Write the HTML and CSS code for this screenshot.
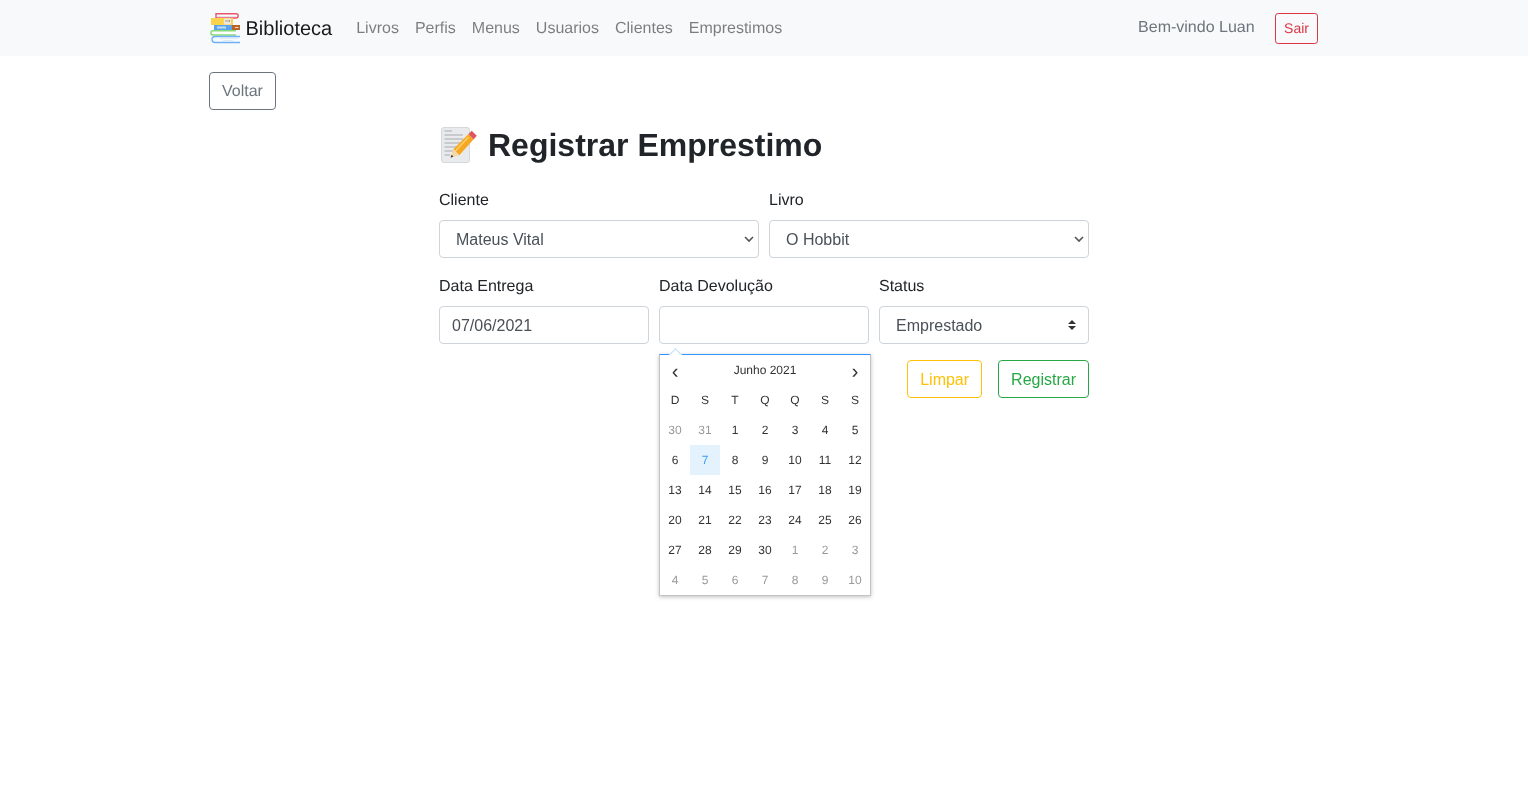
FILE: index.html
```html
<!DOCTYPE html>
<html lang="pt-BR">
<head>
<meta charset="utf-8">
<title>Biblioteca</title>
<link rel="stylesheet" href="styles.css">
</head>
<body>
<div class="page">
<nav class="navbar">
  <div class="nav-inner">
    <a class="brand" href="#">
      <svg class="brand-logo" width="32" height="32" viewBox="0 0 32 32">
        <path d="M7 1.700H27a2 2 0 0 1 0 4.300H7Z" fill="#fff" stroke="#e8546b" stroke-width="1.400"/>
        <path d="M8 4.500H27" stroke="#d9dde2" stroke-width=".8"/>
        <rect x="2" y="6" width="22" height="7" fill="#fcd34d"/>
        <rect x="15" y="6.500" width="7" height="6" fill="#ece8da"/>
        <rect x="16.500" y="8.500" width="1" height="1" fill="#555"/><rect x="18.500" y="8.500" width="1" height="1" fill="#555"/><rect x="20" y="8.500" width="1" height="1" fill="#555"/>
        <rect x="5" y="13" width="18" height="5" fill="#5aa2ec"/>
        <rect x="8" y="14.500" width="9" height="2" fill="#bcdcf8"/>
        <rect x="23" y="13" width="8" height="5" fill="#b5652a"/>
        <rect x="26" y="15" width="3.500" height="1" fill="#f1d8bd"/>
        <path d="M27 18.700H4a2 2 0 0 0 0 4.300H27" fill="#fff" stroke="#86d977" stroke-width="1.400"/>
        <path d="M31 24.500H6a3 3 0 0 0 0 6H31" fill="#f6fbff" stroke="#6db0f5" stroke-width="1.300"/>
        <path d="M11 26.500H29M14 28.500H24" stroke="#d8e4ee" stroke-width=".8"/>
      </svg>
      <span class="brand-name">Biblioteca</span>
    </a>
    <ul class="nav-links">
      <li><a href="#">Livros</a></li>
      <li><a href="#">Perfis</a></li>
      <li><a href="#">Menus</a></li>
      <li><a href="#">Usuarios</a></li>
      <li><a href="#">Clientes</a></li>
      <li><a href="#">Emprestimos</a></li>
    </ul>
    <div class="nav-user">
      <span class="welcome">Bem-vindo Luan</span>
      <a class="btn-sair" href="#">Sair</a>
    </div>
  </div>
</nav>

<main class="container">
  <a class="btn btn-back" href="#">Voltar</a>
  <div class="form-wrap">
    <h2 class="title">
      <svg class="title-icon" width="40" height="40" viewBox="0 0 40 40">
        <rect x="2.500" y="2.500" width="28" height="35" rx="2.500" fill="#e9eaeb" stroke="#d6d7d9" stroke-width="1"/>
        <path d="M5.500 6H13M5.500 10H24M5.500 14H24M5.500 18H21M5.500 22H18M5.500 26H15M5.500 30H11" stroke="#a7a9ac" stroke-width="1"/>
        <path d="M29.500 9 34.500 14.500 20.300 30.300 14.300 24.300Z" fill="#f7a823"/>
        <path d="M29.500 9 32.700 5.800 37.800 10.800 34.500 14.500Z" fill="#e0565f"/>
        <path d="M14.300 24.300 20.300 30.300 11.500 32.800Z" fill="#f4d9a8"/>
        <path d="M12.600 29.700 14.500 31.500 11.500 32.800Z" fill="#3a3a3a"/>
        <path d="M29.500 12 16.500 26" stroke="#fbcf6b" stroke-width="1.500"/>
      </svg>
      <span>Registrar Emprestimo</span>
    </h2>
    <form class="form">
      <div class="row">
        <div class="field field-half">
          <label class="label" for="cliente">Cliente</label>
          <select class="control select select-chevron" id="cliente"><option>Mateus Vital</option></select>
        </div>
        <div class="field field-half">
          <label class="label" for="livro">Livro</label>
          <select class="control select select-chevron" id="livro"><option>O Hobbit</option></select>
        </div>
      </div>
      <div class="row">
        <div class="field field-third">
          <label class="label" for="entrega">Data Entrega</label>
          <input class="control" id="entrega" type="text" value="07/06/2021">
        </div>
        <div class="field field-third date-field">
          <label class="label" for="devolucao">Data Devolução</label>
          <input class="control" id="devolucao" type="text">
          <div class="datepicker">
            <div class="dp-caret"></div>
            <div class="dp-grid">
              <span class="dp-nav">‹</span><span class="dp-month">Junho 2021</span><span class="dp-nav">›</span>
              <span>D</span><span>S</span><span>T</span><span>Q</span><span>Q</span><span>S</span><span>S</span>
              <span class="muted">30</span><span class="muted">31</span><span>1</span><span>2</span><span>3</span><span>4</span><span>5</span>
              <span>6</span><span class="today">7</span><span>8</span><span>9</span><span>10</span><span>11</span><span>12</span>
              <span>13</span><span>14</span><span>15</span><span>16</span><span>17</span><span>18</span><span>19</span>
              <span>20</span><span>21</span><span>22</span><span>23</span><span>24</span><span>25</span><span>26</span>
              <span>27</span><span>28</span><span>29</span><span>30</span><span class="muted">1</span><span class="muted">2</span><span class="muted">3</span>
              <span class="muted">4</span><span class="muted">5</span><span class="muted">6</span><span class="muted">7</span><span class="muted">8</span><span class="muted">9</span><span class="muted">10</span>
            </div>
          </div>
        </div>
        <div class="field field-third">
          <label class="label" for="status">Status</label>
          <select class="control select select-updown" id="status"><option>Emprestado</option></select>
        </div>
      </div>
      <div class="actions">
        <button class="btn btn-warn" type="reset">Limpar</button>
        <button class="btn btn-ok" type="button">Registrar</button>
      </div>
    </form>
  </div>
</main>
</div>
</body>
</html>
```
FILE: styles.css
```css
* { box-sizing: border-box; }
html, body { margin: 0; padding: 0; }
body {
  font-family: "Liberation Sans", Arial, sans-serif;
  font-size: 16px;
  line-height: 1.5;
  color: #212529;
  background: #fff;
  text-rendering: geometricPrecision;
}
.page { min-height: 788px; will-change: transform; }
a { text-decoration: none; }

.navbar { height: 56px; background: #f8f9fa; }
.nav-inner {
  width: 1140px;
  height: 56px;
  margin: 0 auto;
  padding: 0 15px;
  display: flex;
  align-items: center;
}
.brand {
  display: flex;
  align-items: center;
  gap: 4.5px;
  font-size: 20px;
  line-height: 30px;
  color: rgba(0,0,0,.9);
  margin-right: 16px;
}
.brand-name { padding-top: 2px; }
.brand-logo { display: block; }
.nav-links {
  list-style: none;
  margin: 0;
  padding: 0;
  display: flex;
  flex: 1;
}
.nav-links a { display: block; padding: 9px 8px 7px; color: rgba(0,0,0,.5); }
.nav-user { display: flex; align-items: center; }
.welcome { color: #6c757d; margin-right: 20.5px; }
.btn-sair {
  display: block;
  padding: 4px 8px;
  font-size: 14px;
  line-height: 21px;
  color: #dc3545;
  border: 1px solid #dc3545;
  border-radius: 3.2px;
  margin-right: 1px;
}

.container { width: 1140px; margin: 0 auto; padding: 16px 15px 0; }
.btn {
  display: inline-block;
  padding: 7px 12px 5px;
  font: inherit;
  line-height: 24px;
  background: transparent;
  border: 1px solid;
  border-radius: 4px;
}
.btn-back { color: #6c757d; border-color: #6c757d; }
.btn-warn { color: #ffc107; border-color: #ffc107; }
.btn-ok { color: #28a745; border-color: #28a745; }

.form-wrap { width: 650px; margin: 0 auto; }
.title {
  display: flex;
  align-items: center;
  gap: 9px;
  margin: 16px 0 24px;
  font-size: 32px;
  line-height: 38px;
  font-weight: 700;
}
.title-icon { display: block; flex: none; margin: -1px 0; }

.row { display: flex; gap: 10px; margin-bottom: 16px; }
.field { min-width: 0; flex: 1 1 0; }
.label { display: block; padding-top: 1px; margin-bottom: 7px; line-height: 24px; height: 25px; }
.control {
  display: block;
  width: 100%;
  height: 38px;
  padding: 7px 12px 5px;
  font: inherit;
  color: #495057;
  background: #fff;
  border: 1px solid #ced4da;
  border-radius: 4px;
}
.select {
  appearance: none;
  padding-left: 16px;
  background-repeat: no-repeat;
}
.select-chevron {
  background-image: url("data:image/svg+xml,%3Csvg xmlns='http://www.w3.org/2000/svg' width='10' height='8' viewBox='0 0 10 8'%3E%3Cpath d='M1 2 5 6 9 2' fill='none' stroke='%23555' stroke-width='1.600'/%3E%3C/svg%3E");
  background-position: right 4px center;
}
.select-updown {
  background-image: url("data:image/svg+xml,%3Csvg xmlns='http://www.w3.org/2000/svg' width='10' height='14' viewBox='0 0 10 14'%3E%3Cpath d='M5 2 9 6H1ZM5 12 1 8H9Z' fill='%23333'/%3E%3C/svg%3E");
  background-position: right 11px center;
}
.date-field { position: relative; }
.datepicker {
  position: absolute;
  left: 0;
  top: 80px;
  width: 212px;
  height: 242px;
  background: #fff;
  border: 1px solid #c4c4c4;
  border-top-color: #3395ff;
  box-shadow: 0 1px 4px rgba(0,0,0,.25);
  font-size: 12px;
  line-height: 18px;
  color: #333;
  z-index: 10;
}
.dp-caret {
  position: absolute;
  left: 11px;
  top: -5px;
  width: 9px;
  height: 9px;
  background: #fff;
  border-left: 1px solid #bcdcfb;
  border-top: 1px solid #bcdcfb;
  transform: rotate(45deg);
}
.dp-grid {
  position: relative;
  display: grid;
  grid-template-columns: repeat(7, 30px);
  grid-auto-rows: 30px;
  text-align: center;
}
.dp-grid > span { display: flex; align-items: center; justify-content: center; }
.dp-grid > .dp-month { grid-column: span 5; }
.dp-grid > .dp-nav { font-size: 20px; padding-top: 4px; }
.muted { color: #999; }
.today { background: #e3f2fd; color: #3d9bf5; }

.actions { display: flex; justify-content: flex-end; gap: 16px; }
```
